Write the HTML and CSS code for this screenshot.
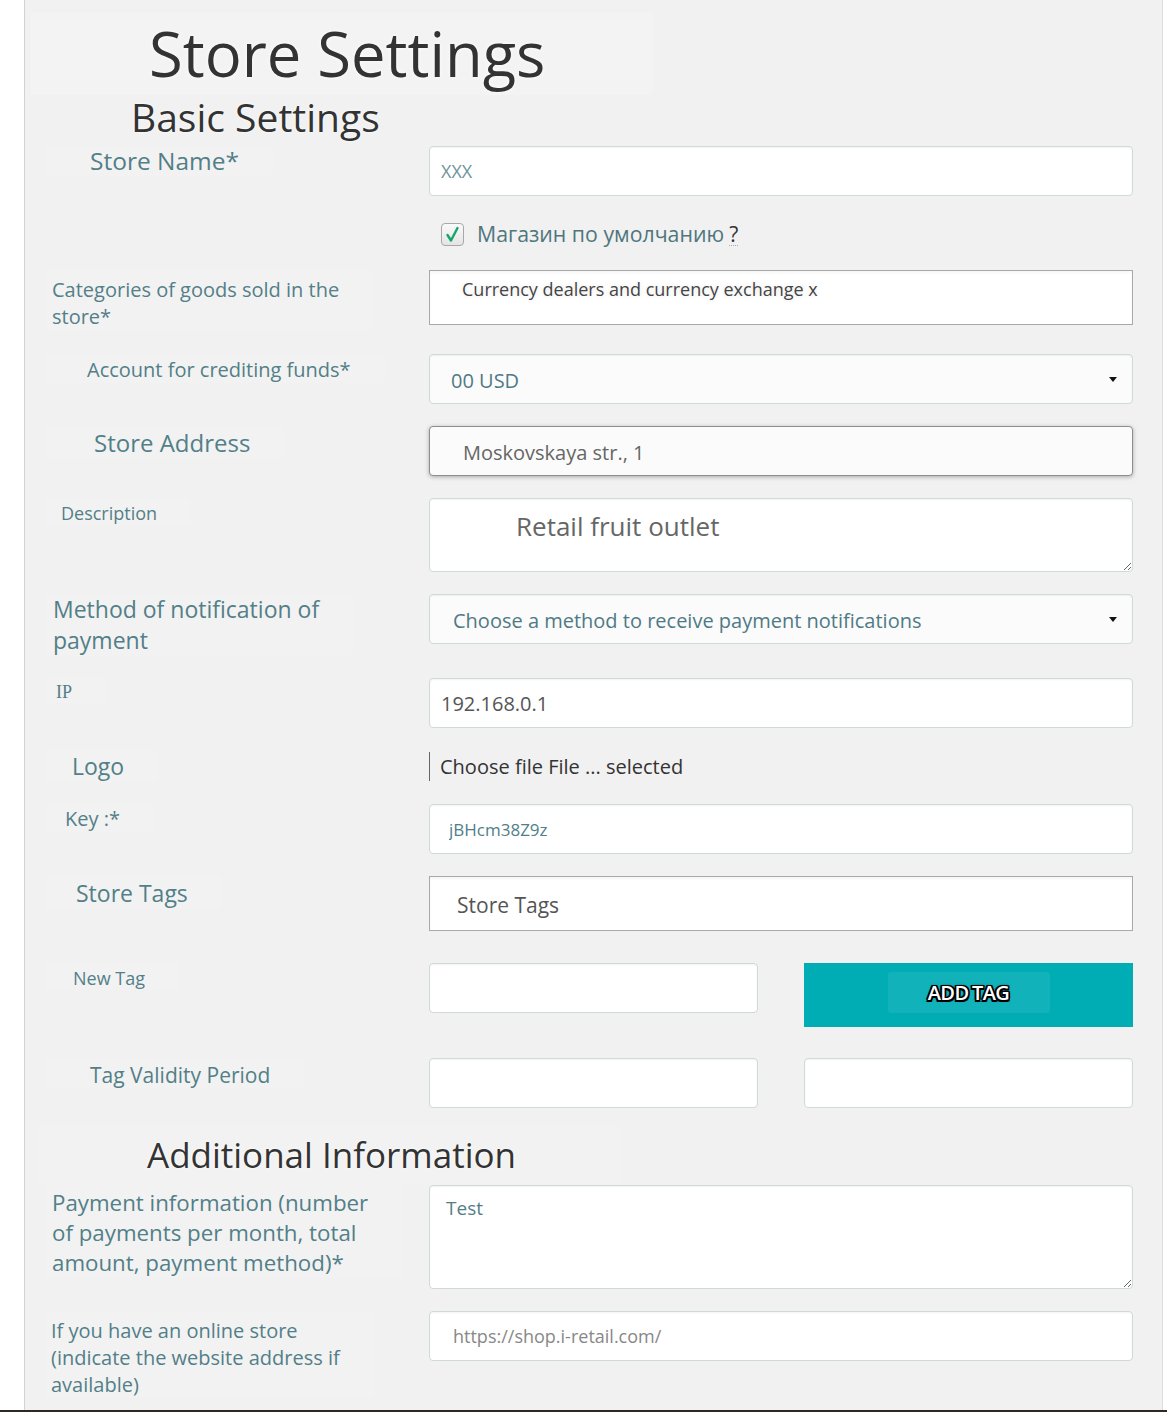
FILE: index.html
```html
<!DOCTYPE html>
<html lang="en">
<head>
<meta charset="utf-8">
<title>Store Settings</title>
<link rel="stylesheet" href="styles.css">
</head>
<body>
<div class="page">
  <form class="panel">
    <h1 class="title">Store Settings</h1>
    <h2 class="subtitle">Basic Settings</h2>

    <div class="row r-first">
      <label class="lbl l-name">Store Name*</label>
      <input class="field f-name" type="text" value="XXX">
    </div>

    <div class="row r-check">
      <div></div>
      <div class="check-line">
        <span class="checkbox"><svg width="23" height="23" viewBox="0 0 23 23"><polyline points="6.5,12 10,17.5 16.5,5" fill="none" stroke="#12a86c" stroke-width="2.4" stroke-linecap="round" stroke-linejoin="round"/></svg></span>
        <span class="check-text">Магазин по умолчанию</span>
        <span class="q">?</span>
      </div>
    </div>

    <div class="row r-cat">
      <label class="lbl l-cat">Categories of goods sold in the<br>store*</label>
      <div class="box f-cat">Currency dealers and currency exchange x</div>
    </div>

    <div class="row r-acc">
      <label class="lbl l-acc">Account for crediting funds*</label>
      <div class="field select f-acc"><span>00 USD</span><svg class="caret" width="8" height="5" viewBox="0 0 8 5"><path d="M0 0H8L4 5Z" fill="#111"/></svg></div>
    </div>

    <div class="row">
      <label class="lbl l-addr">Store Address</label>
      <input class="field f-addr" type="text" value="Moskovskaya str., 1">
    </div>

    <div class="row">
      <label class="lbl l-desc">Description</label>
      <textarea class="field f-desc">Retail fruit outlet</textarea>
    </div>

    <div class="row">
      <label class="lbl l-meth">Method of notification of<br>payment</label>
      <div class="field select f-meth"><span>Choose a method to receive payment notifications</span><svg class="caret" width="8" height="5" viewBox="0 0 8 5"><path d="M0 0H8L4 5Z" fill="#111"/></svg></div>
    </div>

    <div class="row">
      <label class="lbl l-ip">IP</label>
      <input class="field f-ip" type="text" value="192.168.0.1">
    </div>

    <div class="row r-logo">
      <label class="lbl l-logo">Logo</label>
      <div class="file">Choose file File ... selected</div>
    </div>

    <div class="row">
      <label class="lbl l-key">Key :*</label>
      <input class="field f-key" type="text" value="jBHcm38Z9z">
    </div>

    <div class="row">
      <label class="lbl l-tags">Store Tags</label>
      <div class="box f-tags">Store Tags</div>
    </div>

    <div class="row r-new">
      <label class="lbl l-new">New Tag</label>
      <div class="pair">
        <input class="field half" type="text" value="">
        <div class="btn"><span class="btn-inner">ADD TAG</span></div>
      </div>
    </div>

    <div class="row r-valid">
      <label class="lbl l-valid">Tag Validity Period</label>
      <div class="pair">
        <input class="field half" type="text" value="">
        <input class="field half" type="text" value="">
      </div>
    </div>

    <h2 class="section">Additional Information</h2>

    <div class="row r-pay">
      <label class="lbl l-pay">Payment information (number<br>of payments per month, total<br>amount, payment method)*</label>
      <textarea class="field f-pay">Test</textarea>
    </div>

    <div class="row">
      <label class="lbl l-web">If you have an online store<br>(indicate the website address if<br>available)</label>
      <input class="field f-web" type="text" value="https://shop.i-retail.com/">
    </div>
  </form>
</div>
<div class="bottom-bar"></div>
</body>
</html>
```
FILE: styles.css
```css
* { box-sizing: border-box; }
html, body { margin: 0; padding: 0; background: #fff; }
body { width: 1167px; font-family: "Open Sans", "Noto Sans", sans-serif; color: #333; }

.page {
  margin-left: 24px;
  width: 1139px;
  height: 1410px;
  background: #f1f1f1;
  border-left: 1px solid #d2d2d2;
  border-right: 1px solid #dcdcdc;
  overflow: hidden;
}
.bottom-bar { height: 2px; background: #2e2a23; }

.panel { display: flex; flex-direction: column; margin: 0; }

.title {
  margin: 12px 0 0 5px;
  width: 623px;
  height: 83px;
  padding-left: 119px;
  font-size: 61.5px;
  line-height: 83px;
  font-weight: 400;
  color: #333;
  background: rgba(255,255,255,0.14);
  border-radius: 4px;
  text-shadow: 0 0 4px #fff;
}
.subtitle {
  margin: 0;
  height: 44px;
  padding-left: 106px;
  font-size: 39px;
  line-height: 44px;
  font-weight: 400;
  color: #333;
  text-shadow: 0 0 3px #fff;
}
.section {
  margin: 17px 0 0 13px;
  width: 583px;
  height: 60px;
  padding-left: 109px;
  font-size: 35px;
  line-height: 60px;
  font-weight: 400;
  color: #333;
  background: rgba(255,255,255,0.12);
  border-radius: 4px;
  text-shadow: 0 0 3px #fff;
}

.row {
  display: grid;
  grid-template-columns: 404px 704px;
  align-items: start;
  margin-top: 22px;
}
.r-first { margin-top: 7px; }
.r-check { margin-top: 26px; }
.r-cat { margin-top: 24px; }
.r-acc { margin-top: 24px; }
.r-new { margin-top: 32px; }
.r-valid { margin-top: 31px; }
.r-pay { margin-top: 0; }
.r-logo { align-items: center; }

.lbl {
  justify-self: start;
  margin-left: 20px;
  padding-right: 34px;
  color: #527f88;
  background: rgba(255,255,255,0.1);
  border-radius: 4px;
  white-space: nowrap;
}
.l-name { font-size: 24.5px; line-height: 30px; padding-left: 45px; }
.l-cat { font-size: 20px; line-height: 27px; padding-top: 6px; padding-left: 7px; }
.l-acc { font-size: 20px; line-height: 27px; padding-top: 2px; padding-left: 42px; }
.l-addr { font-size: 24px; line-height: 32px; padding-top: 1px; padding-left: 49px; }
.l-desc { font-size: 18px; line-height: 24px; padding-top: 3px; padding-left: 16px; }
.l-meth { font-size: 23px; line-height: 31px; padding-left: 8px; }
.l-ip { font-family: "Liberation Serif", "DejaVu Serif", serif; font-size: 18px; line-height: 22px; padding-top: 3px; padding-left: 11px; }
.l-logo { font-size: 23px; line-height: 32px; padding-left: 27px; }
.l-key { font-size: 20px; line-height: 27px; padding-top: 1px; padding-left: 20px; }
.l-tags { font-size: 23px; line-height: 32px; padding-top: 1px; padding-left: 31px; }
.l-new { font-size: 18px; line-height: 24px; padding-top: 3px; padding-left: 28px; }
.l-valid { font-size: 21px; line-height: 28px; padding-top: 3px; padding-left: 45px; }
.l-pay { font-size: 22.3px; line-height: 30px; padding-top: 3px; padding-left: 7px; }
.l-web { font-size: 20px; line-height: 27px; padding-top: 6px; padding-left: 6px; }

.field {
  display: block;
  width: 704px;
  height: 50px;
  margin: 0;
  background: #fff;
  border: 1px solid #cfd8db;
  border-radius: 4px;
  box-shadow: inset 0 1px 2px rgba(0,0,0,0.05);
  font-family: "Open Sans", "Noto Sans", sans-serif;
  font-size: 20px;
  color: #555;
  outline: none;
}
input.field { padding: 0 0 0 11px; }

.f-name { font-size: 18px; color: #6d949b; padding-left: 11px; }
.f-addr {
  padding-left: 33px !important;
  padding-top: 3px !important;
  color: #666;
  background: #fbfbfb;
  border-color: #8e8e8e;
  box-shadow: 0 1px 4px rgba(0,0,0,0.3);
}
.f-ip { color: #555; }
.f-key { font-size: 17px; color: #4f8089; padding-left: 19px !important; }
.f-web { font-size: 18px; color: #888; padding-left: 23px !important; }

textarea.field { resize: both; }
.f-desc {
  height: 74px;
  padding: 9px 0 0 86px;
  font-size: 26px;
  line-height: 36px;
  color: #666;
}
.f-pay {
  height: 104px;
  padding: 9px 0 0 16px;
  font-size: 19px;
  line-height: 26px;
  color: #557d86;
}

.select {
  display: flex;
  align-items: center;
  justify-content: space-between;
  padding: 2px 15px 0 21px;
  background: #fbfbfb;
  color: #4f7a85;
}
.f-meth { padding-left: 23px; }
.caret { display: block; flex: none; margin-top: -2px; }

.box {
  width: 704px;
  height: 55px;
  background: #fff;
  border: 1px solid #a9a9a9;
  box-shadow: inset 0 2px 3px rgba(0,0,0,0.04);
}
.f-cat {
  padding: 6px 0 0 32px;
  font-size: 18px;
  line-height: 25px;
  color: #444;
  text-shadow: 0 0 2px #fff, 0 0 4px rgba(0,0,0,0.12);
}
.f-tags {
  display: flex;
  align-items: center;
  padding: 2px 0 0 27px;
  font-size: 21px;
  color: #555;
}

.check-line { display: flex; align-items: center; height: 24px; }
.checkbox {
  display: block;
  width: 23px;
  height: 23px;
  margin-left: 12px;
  border: 1px solid #a8a8a8;
  border-radius: 4px;
  background: linear-gradient(#fafafa, #e4e4e4);
}
.checkbox svg { display: block; margin: -1px 0 0 -1px; }
.check-text { margin-left: 13px; font-size: 21.3px; line-height: 24px; color: #4f767d; }
.q {
  margin-left: 5px;
  font-size: 21px;
  line-height: 22px;
  color: #333;
  border-bottom: 1px dotted #aaa;
}

.file {
  height: 29px;
  border-left: 1px solid #666;
  padding-left: 10px;
  font-size: 20px;
  line-height: 29px;
  color: #333;
}

.pair { display: flex; align-items: flex-start; gap: 46px; }
.half { width: 329px; }
.btn {
  width: 329px;
  height: 64px;
  background: #00adb5;
  display: flex;
  justify-content: center;
  padding-top: 9px;
}
.btn-inner {
  width: 162px;
  height: 41px;
  display: flex;
  align-items: center;
  justify-content: center;
  background: rgba(255,255,255,0.07);
  border-radius: 3px;
  font-size: 20px;
  font-weight: 600;
  color: #fff;
  letter-spacing: -0.6px;
  word-spacing: -1px;
  text-shadow: -1.5px -1.5px 0 #000, 1.5px -1.5px 0 #000, -1.5px 1.5px 0 #000, 1.5px 1.5px 0 #000, 0 -1.5px 0 #000, 0 1.5px 0 #000, -1.5px 0 0 #000, 1.5px 0 0 #000, 0 0 3px #000;
}
```
